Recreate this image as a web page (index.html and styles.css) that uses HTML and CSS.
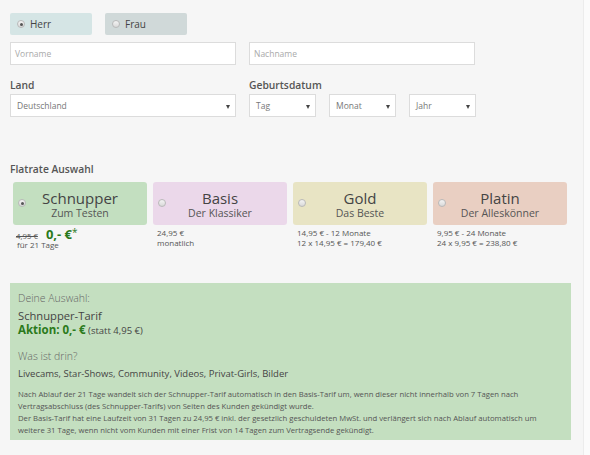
FILE: index.html
```html
<!DOCTYPE html>
<html lang="de">
<head>
<meta charset="utf-8">
<title>Anmeldung</title>
<link rel="stylesheet" href="styles.css">
</head>
<body>
<div class="page">
  <div class="gender">
    <div class="gbox herr"><span class="radio checked"></span><span>Herr</span></div>
    <div class="gbox frau"><span class="radio"></span><span>Frau</span></div>
  </div>

  <div class="pair names">
    <div class="field wide"><span class="ph">Vorname</span></div>
    <div class="field wide"><span class="ph">Nachname</span></div>
  </div>

  <div class="pair meta">
    <div class="col">
      <div class="label">Land</div>
      <div class="field wide select"><span class="val">Deutschland</span><span class="arrow"></span></div>
    </div>
    <div class="col">
      <div class="label">Geburtsdatum</div>
      <div class="dates">
        <div class="field small select"><span class="val">Tag</span><span class="arrow"></span></div>
        <div class="field small select"><span class="val">Monat</span><span class="arrow"></span></div>
        <div class="field small select"><span class="val">Jahr</span><span class="arrow"></span></div>
      </div>
    </div>
  </div>

  <div class="section-title">Flatrate Auswahl</div>

  <div class="plans">
    <div class="plan">
      <div class="card schnupper"><span class="radio checked"></span><div class="ctext"><div class="ctitle">Schnupper</div><div class="csub">Zum Testen</div></div></div>
      <div class="price promo"><span class="old">4,95 €</span><span class="new">0,- €<sup>*</sup></span></div>
      <div class="price">für 21 Tage</div>
    </div>
    <div class="plan">
      <div class="card basis"><span class="radio"></span><div class="ctext"><div class="ctitle">Basis</div><div class="csub">Der Klassiker</div></div></div>
      <div class="price">24,95 €</div>
      <div class="price">monatlich</div>
    </div>
    <div class="plan">
      <div class="card gold"><span class="radio"></span><div class="ctext"><div class="ctitle">Gold</div><div class="csub">Das Beste</div></div></div>
      <div class="price">14,95 € - 12 Monate</div>
      <div class="price">12 x 14,95 € = 179,40 €</div>
    </div>
    <div class="plan">
      <div class="card platin"><span class="radio"></span><div class="ctext"><div class="ctitle">Platin</div><div class="csub">Der Alleskönner</div></div></div>
      <div class="price">9,95 € - 24 Monate</div>
      <div class="price">24 x 9,95 € = 238,80 €</div>
    </div>
  </div>

  <div class="summary">
    <div class="s-label">Deine Auswahl:</div>
    <div class="s-tarif">Schnupper-Tarif</div>
    <div class="s-aktion"><b>Aktion: 0,- €</b> <span>(statt 4,95 €)</span></div>
    <div class="s-label s-gap">Was ist drin?</div>
    <div class="s-list">Livecams, Star-Shows, Community, Videos, Privat-Girls, Bilder</div>
    <p class="s-fine">Nach Ablauf der 21 Tage wandelt sich der Schnupper-Tarif automatisch in den Basis-Tarif um, wenn dieser nicht innerhalb von 7 Tagen nach<br>Vertragsabschluss (des Schnupper-Tarifs) von Seiten des Kunden gekündigt wurde.<br>Der Basis-Tarif hat eine Laufzeit von 31 Tagen zu 24,95 € inkl. der gesetzlich geschuldeten MwSt. und verlängert sich nach Ablauf automatisch um<br>weitere 31 Tage, wenn nicht vom Kunden mit einer Frist von 14 Tagen zum Vertragsende gekündigt.</p>
  </div>
</div>
</body>
</html>
```

FILE: styles.css
```css
html, body {
  margin: 0;
  padding: 0;
}
body {
  background: #fbfbfb;
  font-family: "Open Sans", "DejaVu Sans", sans-serif;
  color: #555;
}
.page {
  width: 584px;
  min-height: 455px;
  box-sizing: border-box;
  padding: 13px 0 0 10px;
  background: #f6f6f6;
  border-right: 1px solid #ececec;
}
.gender {
  display: flex;
  gap: 13px;
}
.gbox {
  width: 82px;
  height: 22px;
  border-radius: 2px;
  display: flex;
  align-items: center;
  box-sizing: border-box;
  padding-left: 7px;
  font-size: 10px;
  color: #444;
}
.gbox .radio { margin-right: 5px; }
.herr { background: #d5e5e5; }
.frau { background: #d0d9d9; }
.radio {
  width: 8px;
  height: 8px;
  border-radius: 50%;
  border: 1px solid #b9b9b9;
  background: linear-gradient(#f4f4f4, #d9d9d9);
  box-sizing: border-box;
  position: relative;
  flex: none;
}
.radio.checked::after {
  content: "";
  position: absolute;
  left: 1.5px;
  top: 1.5px;
  width: 3px;
  height: 3px;
  border-radius: 50%;
  background: #555;
}
.pair {
  display: flex;
  gap: 13px;
}
.names { margin-top: 7px; }
.meta { margin-top: 13px; }
.field {
  height: 23px;
  box-sizing: border-box;
  background: #fff;
  border: 1px solid #dcdcdc;
  display: flex;
  align-items: center;
  font-size: 8.5px;
  position: relative;
}
.field.wide { width: 226px; }
.field.small { width: 67px; }
.ph { color: #aaa; padding-left: 4px; }
.select .val { color: #777; padding-left: 6px; }
.arrow {
  position: absolute;
  right: 5px;
  top: 10px;
  width: 0;
  height: 0;
  border-left: 2.5px solid transparent;
  border-right: 2.5px solid transparent;
  border-top: 4px solid #444;
}
.label {
  font-size: 10.3px;
  font-weight: 600;
  line-height: 14px;
  color: #555;
  margin-bottom: 2px;
}
.dates {
  display: flex;
  gap: 13px;
}
.section-title {
  margin-top: 45px;
  font-size: 10.3px;
  font-weight: 600;
  line-height: 14px;
  color: #555;
}
.plans {
  display: flex;
  gap: 6px;
  margin-top: 6px;
  margin-left: 3px;
}
.plan { width: 134px; }
.card {
  height: 43px;
  border-radius: 3px;
  display: flex;
  align-items: center;
  position: relative;
}
.card .radio {
  position: absolute;
  left: 5px;
  top: 17px;
}
.ctext {
  flex: 1;
  text-align: center;
}
.ctitle {
  font-size: 15px;
  line-height: 18px;
  font-weight: 400;
  color: #444;
}
.csub {
  font-size: 10.5px;
  line-height: 12px;
  color: #555;
}
.schnupper { background: #c3dfc0; }
.basis { background: #ebd8ea; }
.gold { background: #e8e4c4; }
.platin { background: #e9cfc2; }
.price {
  font-size: 8px;
  line-height: 10px;
  color: #555;
  padding-left: 4px;
  height: 10px;
}
.plan .price:nth-child(2) { margin-top: 3px; }
.price.promo {
  display: flex;
  align-items: baseline;
  gap: 8px;
  padding-left: 3px;
  height: 12px;
  line-height: 12px;
}
.old {
  text-decoration: line-through;
  font-size: 7.8px;
  line-height: 12px;
}
.new {
  color: #2b7a1b;
  font-weight: 700;
  font-size: 13px;
  line-height: 12px;
}
.new sup {
  font-size: 10px;
  font-weight: 400;
  vertical-align: 3px;
  line-height: 0;
}
.summary {
  margin-top: 33px;
  width: 561px;
  height: 157px;
  box-sizing: border-box;
  background: #c4dfc0;
  padding: 8px 8px 0;
}
.s-label {
  font-size: 10.5px;
  line-height: 14px;
  color: #666;
  font-weight: 300;
}
.s-tarif {
  margin-top: 4px;
  font-size: 11.2px;
  line-height: 14px;
  color: #444;
}
.s-aktion {
  font-size: 9.5px;
  line-height: 14px;
  color: #444;
}
.s-aktion b {
  font-size: 11.5px;
  color: #2b7a1b;
}
.s-gap { margin-top: 11px; }
.s-list {
  margin-top: 4px;
  font-size: 9.5px;
  line-height: 14px;
  color: #444;
}
.s-fine {
  margin: 7px 0 0;
  font-size: 7.7px;
  line-height: 12px;
  color: #555;
}
```
